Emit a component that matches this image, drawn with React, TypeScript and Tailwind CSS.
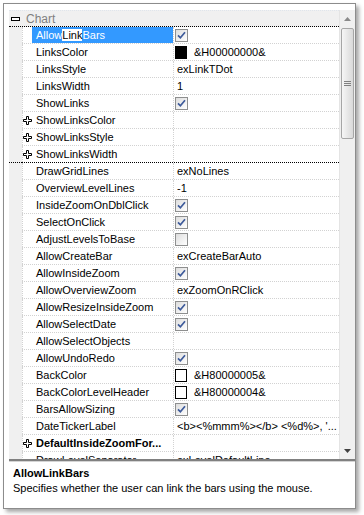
import React from 'react';

type Value =
  | { type: 'check'; checked: boolean }
  | { type: 'text'; text: string }
  | { type: 'color'; color: string; text: string }
  | { type: 'empty' };

interface PropItem {
  name: string;
  value: Value;
  expandable?: boolean;
  bold?: boolean;
  lastInGroup?: boolean;
}

const on: Value = { type: 'check', checked: true };
const off: Value = { type: 'check', checked: false };
const empty: Value = { type: 'empty' };
const txt = (text: string): Value => ({ type: 'text', text });

const ITEMS: PropItem[] = [
  { name: 'AllowLinkBars', value: on },
  { name: 'LinksColor', value: { type: 'color', color: '#000000', text: '&H00000000&' } },
  { name: 'LinksStyle', value: txt('exLinkTDot') },
  { name: 'LinksWidth', value: txt('1') },
  { name: 'ShowLinks', value: on },
  { name: 'ShowLinksColor', value: empty, expandable: true },
  { name: 'ShowLinksStyle', value: empty, expandable: true },
  { name: 'ShowLinksWidth', value: empty, expandable: true, lastInGroup: true },
  { name: 'DrawGridLines', value: txt('exNoLines') },
  { name: 'OverviewLevelLines', value: txt('-1') },
  { name: 'InsideZoomOnDblClick', value: on },
  { name: 'SelectOnClick', value: on },
  { name: 'AdjustLevelsToBase', value: off },
  { name: 'AllowCreateBar', value: txt('exCreateBarAuto') },
  { name: 'AllowInsideZoom', value: on },
  { name: 'AllowOverviewZoom', value: txt('exZoomOnRClick') },
  { name: 'AllowResizeInsideZoom', value: on },
  { name: 'AllowSelectDate', value: on },
  { name: 'AllowSelectObjects', value: empty },
  { name: 'AllowUndoRedo', value: on },
  { name: 'BackColor', value: { type: 'color', color: '#ffffff', text: '&H80000005&' } },
  { name: 'BackColorLevelHeader', value: { type: 'color', color: '#ffffff', text: '&H80000004&' } },
  { name: 'BarsAllowSizing', value: on },
  { name: 'DateTickerLabel', value: txt("<b><%mmm%></b> <%d%>, '...") },
  { name: 'DefaultInsideZoomFor...', value: empty, expandable: true, bold: true },
  { name: 'DrawLevelSeparator', value: txt('exLevelDefaultLine') },
];

const CheckBox = ({ checked }: { checked: boolean }) => (
  <div className="w-[13px] h-[13px] border border-[#8e8f8f] bg-gradient-to-br from-[#dedede] to-white flex items-center justify-center">
    {checked && (
      <svg width="9" height="9" viewBox="0 0 9 9">
        <path d="M1 4.3 L3.4 6.8 L8 1.3" fill="none" stroke="#3d5a9a" strokeWidth="1.7" />
      </svg>
    )}
  </div>
);

const PlusIcon = () => (
  <svg width="9" height="9" viewBox="0 0 9 9">
    <polygon
      points="3.5,0.5 5.5,0.5 5.5,3.5 8.5,3.5 8.5,5.5 5.5,5.5 5.5,8.5 3.5,8.5 3.5,5.5 0.5,5.5 0.5,3.5 3.5,3.5"
      fill="#fff"
      stroke="#000"
      strokeWidth="1"
    />
  </svg>
);

const ValueCell = ({ value }: { value: Value }) => {
  if (value.type === 'check') {
    return (
      <div className="pl-[1px] flex items-center h-full">
        <CheckBox checked={value.checked} />
      </div>
    );
  }
  if (value.type === 'color') {
    return (
      <div className="pl-[1px] flex items-center h-full gap-[7px]">
        <div className="w-[12px] h-[13px] border border-black" style={{ backgroundColor: value.color }} />
        <span>{value.text}</span>
      </div>
    );
  }
  if (value.type === 'text') {
    return <div className="pl-[3px] whitespace-nowrap overflow-hidden">{value.text}</div>;
  }
  return null;
};

const PropRow = ({ item, selected }: { item: PropItem; selected: boolean }) => (
  <div className="flex h-[17px] shrink-0">
    <div className={`w-[13px] bg-[#f0f0f0] ${item.lastInGroup ? 'border-b border-dotted border-black' : ''}`} />
    <div className={`flex flex-1 border-b border-dotted ${item.lastInGroup ? 'border-black' : 'border-[#d2d2d2]'}`}>
      <div className="w-[10px] flex items-center border-l border-dotted border-[#d2d2d2]">
        {item.expandable && <PlusIcon />}
      </div>
      <div
        className={`w-[142px] pl-[4px] border-r border-dotted border-[#d2d2d2] bg-clip-padding whitespace-nowrap overflow-hidden ${
          selected ? 'bg-[#3399ff] text-white' : ''
        } ${item.bold ? 'font-bold' : ''}`}
      >
        {selected ? (
          <>
            Allow<span className="bg-white text-black">Link</span>Bars
          </>
        ) : (
          item.name
        )}
      </div>
      <div className="flex-1 overflow-hidden">
        <ValueCell value={item.value} />
      </div>
    </div>
  </div>
);

const ScrollBar = () => (
  <div className="w-[16px] bg-[#f0f0f0] border-l border-[#e4e4e4] flex flex-col items-center">
    <div className="h-[18px] flex items-center justify-center">
      <svg width="7" height="4" viewBox="0 0 7 4">
        <polygon points="3.5,0 7,4 0,4" fill="#8a8a8a" />
      </svg>
    </div>
    <div className="w-[13px] h-[111px] rounded-[2px] border border-[#a6a6a6] bg-gradient-to-r from-[#f6f6f6] to-[#d9d9d9] flex items-center justify-center">
      <div className="flex flex-col gap-[1px]">
        <div className="w-[7px] h-[1px] bg-[#808080]" />
        <div className="w-[7px] h-[1px] bg-[#808080]" />
        <div className="w-[7px] h-[1px] bg-[#808080]" />
      </div>
    </div>
    <div className="flex-1" />
    <div className="h-[17px] flex items-center justify-center">
      <svg width="7" height="4" viewBox="0 0 7 4">
        <polygon points="0,0 7,0 3.5,4" fill="#404040" />
      </svg>
    </div>
  </div>
);

export default function App() {
  return (
    <div className="w-[364px] h-[515px] bg-white pt-[3px] pl-[3px] font-['Liberation_Sans',Arial,sans-serif] text-[11px] leading-[16px] text-black">
      <div className="w-[353px] h-[506px] border border-[#8c8c8c] bg-white shadow-[3px_3px_4px_rgba(0,0,0,0.35)] flex flex-col">
        <div className="mt-[6px] ml-[5px] h-[449px] flex overflow-hidden">
          <div className="flex-1 flex flex-col overflow-hidden">
            <div className="flex h-[17px] shrink-0 items-center bg-[#f0f0f0] border-t border-[#dfe5ec] border-b border-dotted border-b-black">
              <div className="pl-[2px] flex items-center">
                <svg width="9" height="4" viewBox="0 0 9 4">
                  <rect x="0.5" y="0.5" width="8" height="3" fill="#fff" stroke="#000" />
                </svg>
              </div>
              <span className="ml-[6px] text-[12px] text-[#808080]">Chart</span>
            </div>
            {ITEMS.map((item, i) => (
              <PropRow key={item.name} item={item} selected={i === 0} />
            ))}
          </div>
          <ScrollBar />
        </div>
        <div className="ml-[5px] h-[3px] border-t-2 border-[#808080] border-b border-b-[#d4d4d4]" />
        <div className="pl-[9px] pt-[4px] leading-[15px]">
          <div className="font-bold">AllowLinkBars</div>
          <div>Specifies whether the user can link the bars using the mouse.</div>
        </div>
      </div>
    </div>
  );
}
